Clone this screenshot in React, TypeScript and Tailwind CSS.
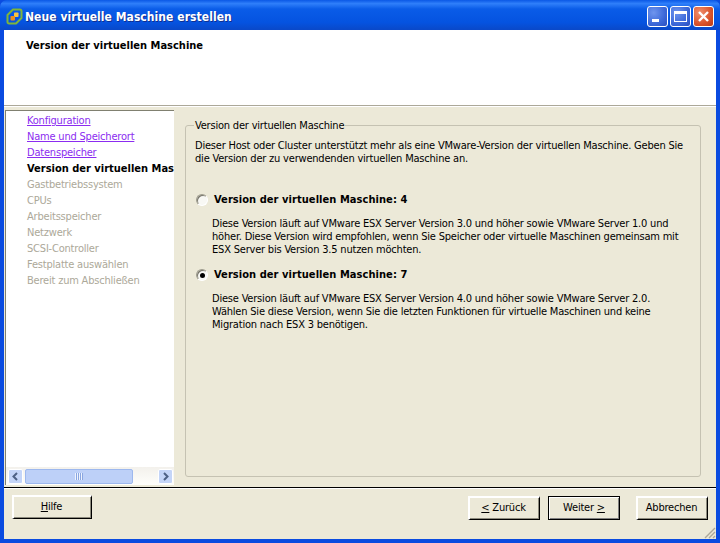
const wizardSteps = [
  { label: 'Konfiguration', state: 'done' },
  { label: 'Name und Speicherort', state: 'done' },
  { label: 'Datenspeicher', state: 'done' },
  { label: 'Version der virtuellen Maschine', state: 'current' },
  { label: 'Gastbetriebssystem', state: 'todo' },
  { label: 'CPUs', state: 'todo' },
  { label: 'Arbeitsspeicher', state: 'todo' },
  { label: 'Netzwerk', state: 'todo' },
  { label: 'SCSI-Controller', state: 'todo' },
  { label: 'Festplatte auswählen', state: 'todo' },
  { label: 'Bereit zum Abschließen', state: 'todo' },
]

function AppIcon() {
  return (
    <svg width="17" height="17" viewBox="0 0 17 17">
      <path
        d="M7 1.5 H14 A1.5 1.5 0 0 1 15.5 3 V10 L10 15.5 H3 A1.5 1.5 0 0 1 1.5 14 V7 Z"
        fill="none"
        stroke="#7fb53a"
        strokeWidth="2"
        strokeLinejoin="round"
      />
      <rect x="8" y="4.5" width="4.5" height="4.5" rx="0.8" fill="#f7c544" />
      <rect x="4.5" y="8" width="4.5" height="4.5" rx="0.8" fill="#ee8f1d" />
    </svg>
  )
}

function TitleButton({ kind }: { kind: 'min' | 'max' | 'close' }) {
  const bg =
    kind === 'close'
      ? 'bg-[radial-gradient(circle_at_30%_30%,#f0906f,#d9532c_60%,#b93a14)]'
      : 'bg-[radial-gradient(circle_at_30%_30%,#6f95ee,#3c68d8_60%,#2a4fc0)]'
  return (
    <div className={`flex h-[21px] w-[21px] items-center justify-center rounded-[3px] border border-white ${bg}`}>
      {kind === 'min' && <div className="mt-[8px] mr-[5px] h-[3px] w-[7px] bg-white" />}
      {kind === 'max' && <div className="h-[11px] w-[13px] border border-t-[3px] border-white" />}
      {kind === 'close' && (
        <svg width="13" height="13" viewBox="0 0 13 13">
          <path d="M2 2 L11 11 M11 2 L2 11" stroke="#fff" strokeWidth="2.4" />
        </svg>
      )}
    </div>
  )
}

function XpButton({
  children,
  isDefault,
  className,
}: {
  children: React.ReactNode
  isDefault?: boolean
  className: string
}) {
  return (
    <button
      className={`flex h-[24px] items-center justify-center bg-[#ece9d8] text-black ${className} ${
        isDefault
          ? 'border border-black shadow-[inset_1px_1px_0_#fff,inset_-1px_-1px_0_#808080]'
          : 'border-t-2 border-r border-b border-l-2 border-t-white border-r-black border-b-black border-l-white pr-[2px] shadow-[inset_-1px_-1px_0_#8d8b7e]'
      }`}
    >
      <span>{children}</span>
    </button>
  )
}

function Radio({ checked }: { checked?: boolean }) {
  return (
    <div className="ml-[1px] flex h-[12px] w-[12px] shrink-0 items-center justify-center rounded-full border border-[#9c9a8c] border-r-white border-b-white bg-[#f8f8f4] shadow-[inset_1px_1px_0_#77756a]">
      {checked && <div className="h-[5px] w-[5px] rounded-full bg-black" />}
    </div>
  )
}

function VersionOption({ label, lines, checked }: { label: string; lines: string[]; checked?: boolean }) {
  return (
    <div>
      <div className="flex items-center gap-[6px]">
        <Radio checked={checked} />
        <span className="text-[11px] font-bold leading-[14px] tracking-[0.06px]">{label}</span>
      </div>
      <p className="mt-[10px] ml-[17px] leading-[13px]">
        {lines.map((line) => (
          <span key={line} className="block whitespace-nowrap">
            {line}
          </span>
        ))}
      </p>
    </div>
  )
}

function Scrollbar() {
  return (
    <div className="flex h-[18px] shrink-0 items-center bg-[linear-gradient(180deg,#f3f1ec,#fefefb)] pr-[1px] pl-[2px]">
      <div className="flex h-[15px] w-[15px] items-center justify-center rounded-[2px] border border-white bg-[#c4d5f8]">
        <svg width="9" height="9" viewBox="0 0 9 9">
          <path d="M6 1 L2.5 4.5 L6 8" fill="none" stroke="#4d6185" strokeWidth="2" />
        </svg>
      </div>
      <div className="ml-[2px] flex h-[15px] w-[108px] items-center justify-center rounded-[2px] border border-[#9db8ee] bg-[#bdd0f8]">
        <div className="h-[7px] w-[8px] bg-[repeating-linear-gradient(90deg,#eef3fe_0,#eef3fe_1px,#8aa6e0_1px,#8aa6e0_2px)]" />
      </div>
      <div className="flex-1" />
      <div className="flex h-[15px] w-[15px] items-center justify-center rounded-[2px] border border-white bg-[#c4d5f8]">
        <svg width="9" height="9" viewBox="0 0 9 9">
          <path d="M3 1 L6.5 4.5 L3 8" fill="none" stroke="#4d6185" strokeWidth="2" />
        </svg>
      </div>
    </div>
  )
}

export default function App() {
  return (
    <div className="flex h-[543px] w-[720px] flex-col overflow-hidden bg-[#0a4be0] font-['DejaVu_Sans',sans-serif] text-[11px] tracking-[-0.2px] text-black [font-stretch:condensed]">
      {/* Title bar */}
      <div className="flex h-[30px] shrink-0 items-center justify-between rounded-t-[7px] bg-[linear-gradient(180deg,#0a58e6_0%,#2f7ffa_12%,#0a5ce8_30%,#0553e0_75%,#0a48c8_100%)] pt-[3px] pr-[6px] pl-[6px]">
        <div className="flex items-center gap-[2px]">
          <AppIcon />
          <span className="text-[12px] font-bold tracking-[0.06px] text-white [text-shadow:1px_1px_0_#0f2f90]">
            Neue virtuelle Maschine erstellen
          </span>
        </div>
        <div className="flex gap-[2px]">
          <TitleButton kind="min" />
          <TitleButton kind="max" />
          <TitleButton kind="close" />
        </div>
      </div>

      <div className="mx-[4px] mb-[4px] flex min-h-0 flex-1 flex-col bg-[#ece9d8]">
        {/* Header */}
        <div className="h-[76px] shrink-0 border-b border-[#aca899] bg-white pt-[9px] pl-[22px] font-bold leading-[13px] tracking-normal shadow-[0_1px_0_#fff]">
          Version der virtuellen Maschine
        </div>

        <div className="flex min-h-0 flex-1 border-b border-black pt-[4px] pb-[4px] pl-[1px]">
          {/* Steps */}
          <div className="flex h-[375px] w-[169px] shrink-0 flex-col border-t border-l border-t-[#808070] border-l-[#808070] bg-white">
            <div className="min-h-0 flex-1 overflow-hidden pt-[2px] pl-[21px]">
              {wizardSteps.map((step) => (
                <div
                  key={step.label}
                  className={`h-[16px] whitespace-nowrap leading-[15px] ${
                    step.state === 'done'
                      ? 'text-[#8b2cf0] underline'
                      : step.state === 'current'
                        ? 'font-bold tracking-normal text-black'
                        : 'text-[#aca899]'
                  }`}
                >
                  {step.label}
                </div>
              ))}
            </div>
            <Scrollbar />
          </div>

          {/* Version group */}
          <fieldset className="mt-[9px] ml-[11px] h-[358px] w-[516px] rounded-[3px] border border-[#c5c2b2] pr-[8px] pl-[9px]">
            <legend className="ml-[-1px] px-[1px] leading-[13px]">Version der virtuellen Maschine</legend>
            <p className="mt-[7px] leading-[13px]">
              <span className="block whitespace-nowrap">
                Dieser Host oder Cluster unterstützt mehr als eine VMware-Version der virtuellen Maschine. Geben Sie
              </span>
              <span className="block whitespace-nowrap">die Version der zu verwendenden virtuellen Maschine an.</span>
            </p>
            <div className="mt-[28px] flex flex-col gap-[12px]">
              <VersionOption
                label="Version der virtuellen Maschine: 4"
                lines={[
                  'Diese Version läuft auf VMware ESX Server Version 3.0 und höher sowie VMware Server 1.0 und',
                  'höher. Diese Version wird empfohlen, wenn Sie Speicher oder virtuelle Maschinen gemeinsam mit',
                  'ESX Server bis Version 3.5 nutzen möchten.',
                ]}
              />
              <VersionOption
                checked
                label="Version der virtuellen Maschine: 7"
                lines={[
                  'Diese Version läuft auf VMware ESX Server Version 4.0 und höher sowie VMware Server 2.0.',
                  'Wählen Sie diese Version, wenn Sie die letzten Funktionen für virtuelle Maschinen und keine',
                  'Migration nach ESX 3 benötigen.',
                ]}
              />
            </div>
          </fieldset>
        </div>

        {/* Footer */}
        <div className="relative flex h-[51px] shrink-0 items-start border-t border-t-white pt-[6px] pr-[8px] pl-[8px]">
          <XpButton className="w-[80px]">
            <u>H</u>ilfe
          </XpButton>
          <div className="mt-[1px] ml-auto flex">
            <XpButton className="w-[72px]">
              <u>&lt;</u> Zurück
            </XpButton>
            <XpButton isDefault className="ml-[8px] w-[72px]">
              Weiter <u>&gt;</u>
            </XpButton>
            <XpButton className="ml-[16px] w-[72px]">Abbrechen</XpButton>
          </div>
          <svg className="absolute right-0 bottom-0" width="12" height="12" viewBox="0 0 12 12">
            <path d="M11 1 L1 11 M11 5 L5 11 M11 9 L9 11" stroke="#aca899" strokeWidth="1.4" />
          </svg>
        </div>
      </div>
    </div>
  )
}
